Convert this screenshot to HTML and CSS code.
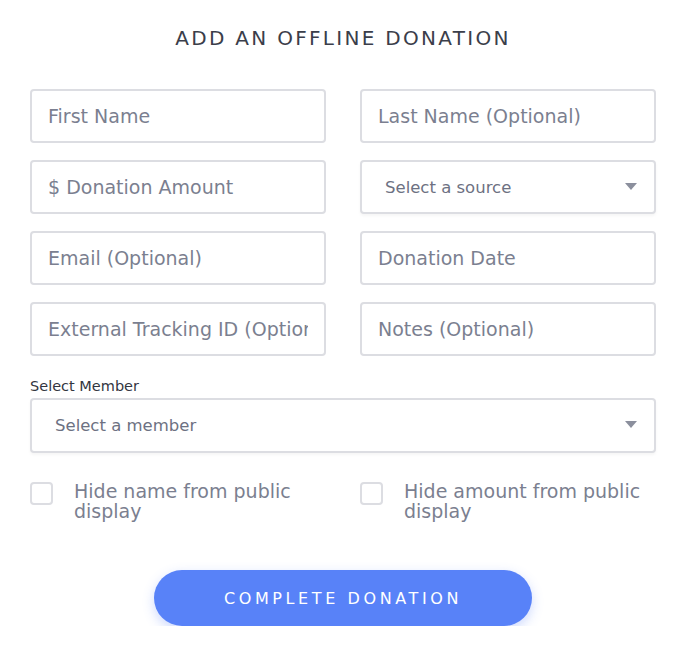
FILE: index.html
```html
<!DOCTYPE html>
<html lang="en">
<head>
  <meta charset="UTF-8">
  <meta name="viewport" content="width=device-width, initial-scale=1.0">
  <title>Add an offline donation</title>
  <link rel="stylesheet" href="styles.css">
</head>
<body>
  <form class="donation-form">
    <h2>Add an offline donation</h2>

    <div class="field-grid">
      <input type="text" placeholder="First Name">
      <input type="text" placeholder="Last Name (Optional)">
      <input type="text" placeholder="$ Donation Amount">
      <div class="select-wrap">
        <select>
          <option>Select a source</option>
          <option>Cash</option>
          <option>Check</option>
        </select>
        <svg class="caret" width="12" height="7" viewBox="0 0 12 7"><path d="M0 0h12L6 7z" fill="#8b8f9d"/></svg>
      </div>
      <input type="text" placeholder="Email (Optional)">
      <input type="text" placeholder="Donation Date">
      <input type="text" placeholder="External Tracking ID (Optional)">
      <input type="text" placeholder="Notes (Optional)">
    </div>

    <label class="field-label">Select Member</label>
    <div class="select-wrap">
      <select class="select-lg">
        <option>Select a member</option>
      </select>
      <svg class="caret" width="12" height="7" viewBox="0 0 12 7"><path d="M0 0h12L6 7z" fill="#8b8f9d"/></svg>
    </div>

    <div class="check-row">
      <label class="check"><input type="checkbox"><span>Hide name from public display</span></label>
      <label class="check"><input type="checkbox"><span>Hide amount from public display</span></label>
    </div>

    <div class="actions">
      <button type="button" class="submit-btn">Complete Donation</button>
    </div>
  </form>
</body>
</html>
```

FILE: styles.css
```css
body { margin: 0; background: #fff; font-family: 'DejaVu Sans', 'Lato', sans-serif; color: #3b3e4a; }
.donation-form {
  width: 626px;
  margin: 0 0 0 30px;
  padding-top: 26px;
}
.donation-form h2 {
  margin: 0 0 39px;
  text-align: center;
  text-transform: uppercase;
  font-weight: 400;
  font-size: 20px;
  letter-spacing: 2.3px;
  color: #3b3e4a;
}
.field-grid {
  display: grid;
  grid-template-columns: 1fr 1fr;
  column-gap: 34px;
  row-gap: 17px;
}
input[type="text"], select {
  box-sizing: border-box;
  width: 100%;
  height: 54px;
  padding: 0 16px;
  border: 2px solid #dcdde2;
  border-radius: 4px;
  background: #fff;
  font-family: inherit;
  font-size: 19px;
  color: #7b7f90;
  outline: none;
}
input::placeholder { color: #7b7f90; opacity: 1; }
.select-wrap { position: relative; }
select {
  -webkit-appearance: none;
  appearance: none;
  padding-left: 23px;
  font-size: 16.5px;
  color: #6d7182;
  box-shadow: 0 2px 3px rgba(0,0,0,0.04);
}
.select-lg { height: 55px; }
.caret {
  position: absolute;
  right: 19px;
  top: 23px;
  pointer-events: none;
}
.field-label {
  display: block;
  margin: 22px 0 4px;
  font-size: 14.5px;
  color: #33363f;
}
.check-row {
  display: grid;
  grid-template-columns: 1fr 1fr;
  column-gap: 34px;
  margin-top: 28px;
}
.check {
  display: flex;
  align-items: flex-start;
  gap: 21px;
  font-size: 19px;
  line-height: 20px;
  color: #7b7f90;
}
.check input {
  -webkit-appearance: none;
  appearance: none;
  flex: none;
  width: 23px;
  height: 23px;
  margin: 1px 0 0;
  border: 2px solid #dcdde2;
  border-radius: 4px;
  background: #fff;
}
.actions {
  display: flex;
  justify-content: center;
  margin-top: 49px;
}
.submit-btn {
  width: 378px;
  height: 56px;
  border: none;
  border-radius: 28px;
  background: #5882f8;
  color: #fff;
  font-family: inherit;
  font-size: 16px;
  letter-spacing: 3.6px;
  text-transform: uppercase;
  box-shadow: 0 4px 12px rgba(88,130,248,0.3);
  cursor: pointer;
}
```
